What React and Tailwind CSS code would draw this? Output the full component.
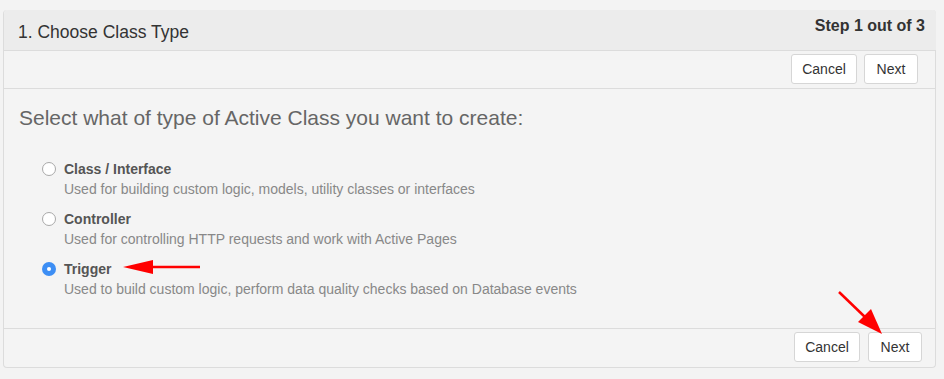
import React from 'react';

const options = [
  { key: 'class', label: 'Class / Interface', desc: 'Used for building custom logic, models, utility classes or interfaces' },
  { key: 'controller', label: 'Controller', desc: 'Used for controlling HTTP requests and work with Active Pages' },
  { key: 'trigger', label: 'Trigger', desc: 'Used to build custom logic, perform data quality checks based on Database events' },
];

const btn = 'h-[30px] bg-white border border-[#d6d6d6] rounded-[3px] text-[14px] text-[#333] text-center';

const Radio = ({ checked }) =>
  checked ? (
    <span className="w-[14px] h-[14px] rounded-full bg-[#3d8ef4] flex items-center justify-center shrink-0">
      <span className="w-[4px] h-[4px] rounded-full bg-white" />
    </span>
  ) : (
    <span className="w-[14px] h-[14px] rounded-full border border-[#a9a9a9] bg-white shrink-0" />
  );

const App = () => {
  return (
    <div className="w-[944px] h-[379px] bg-[#f3f3f3] pt-[10px] pl-[3px] relative" style={{ fontFamily: '"Liberation Sans", Arial, sans-serif' }}>
      <div className="w-[933px] h-[358px] border-l border-r border-b border-[#dcdcdc] rounded-[4px] bg-[#f4f4f4] flex flex-col">
        <div className="h-[41px] bg-[#ececec] rounded-t-[4px] border-b border-[#dcdcdc] flex justify-between pl-[14px] pr-[11px] -mr-px">
          <span className="text-[17.5px] text-[#333] pt-[9px]">1. Choose Class Type</span>
          <span className="text-[16px] font-bold text-[#333] pt-[4px]">Step 1 out of 3</span>
        </div>
        <div className="h-[38px] border-b border-[#dcdcdc] flex justify-end items-start gap-[7px] pt-[3px] pr-[17px]">
          <button className={`${btn} w-[66px]`}>Cancel</button>
          <button className={`${btn} w-[54px]`}>Next</button>
        </div>
        <div className="flex-1 pl-[15px]">
          <div className="text-[21px] text-[#666] pt-[13px]">Select what of type of Active Class you want to create:</div>
          <div className="pt-[27px] pl-[23px] flex flex-col gap-[12px]">
            {options.map(o => (
              <div key={o.key}>
                <div className="flex items-center gap-[8px] h-[17px]">
                  <Radio checked={o.key === 'trigger'} />
                  <span className="text-[14px] font-bold text-[#555]">{o.label}</span>
                </div>
                <div className="pl-[22px] text-[14px] text-[#888] pt-[2px] leading-[19px]">{o.desc}</div>
              </div>
            ))}
          </div>
        </div>
        <div className="h-[39px] border-t border-[#dcdcdc] flex justify-end items-start gap-[8px] pt-[3px] pr-[13px]">
          <button className={`${btn} w-[66px]`}>Cancel</button>
          <button className={`${btn} w-[54px]`}>Next</button>
        </div>
      </div>
      <svg className="absolute left-0 top-0 pointer-events-none" width="944" height="379">
        <line x1="200" y1="267" x2="145" y2="267" stroke="#ff0000" strokeWidth="2.5" />
        <polygon points="123,267 153,260 153,274" fill="#ff0000" />
        <line x1="839" y1="292" x2="866" y2="318" stroke="#ff0000" strokeWidth="2.5" />
        <polygon points="882,334 858,322 871,309" fill="#ff0000" />
      </svg>
    </div>
  );
};

export default App;
